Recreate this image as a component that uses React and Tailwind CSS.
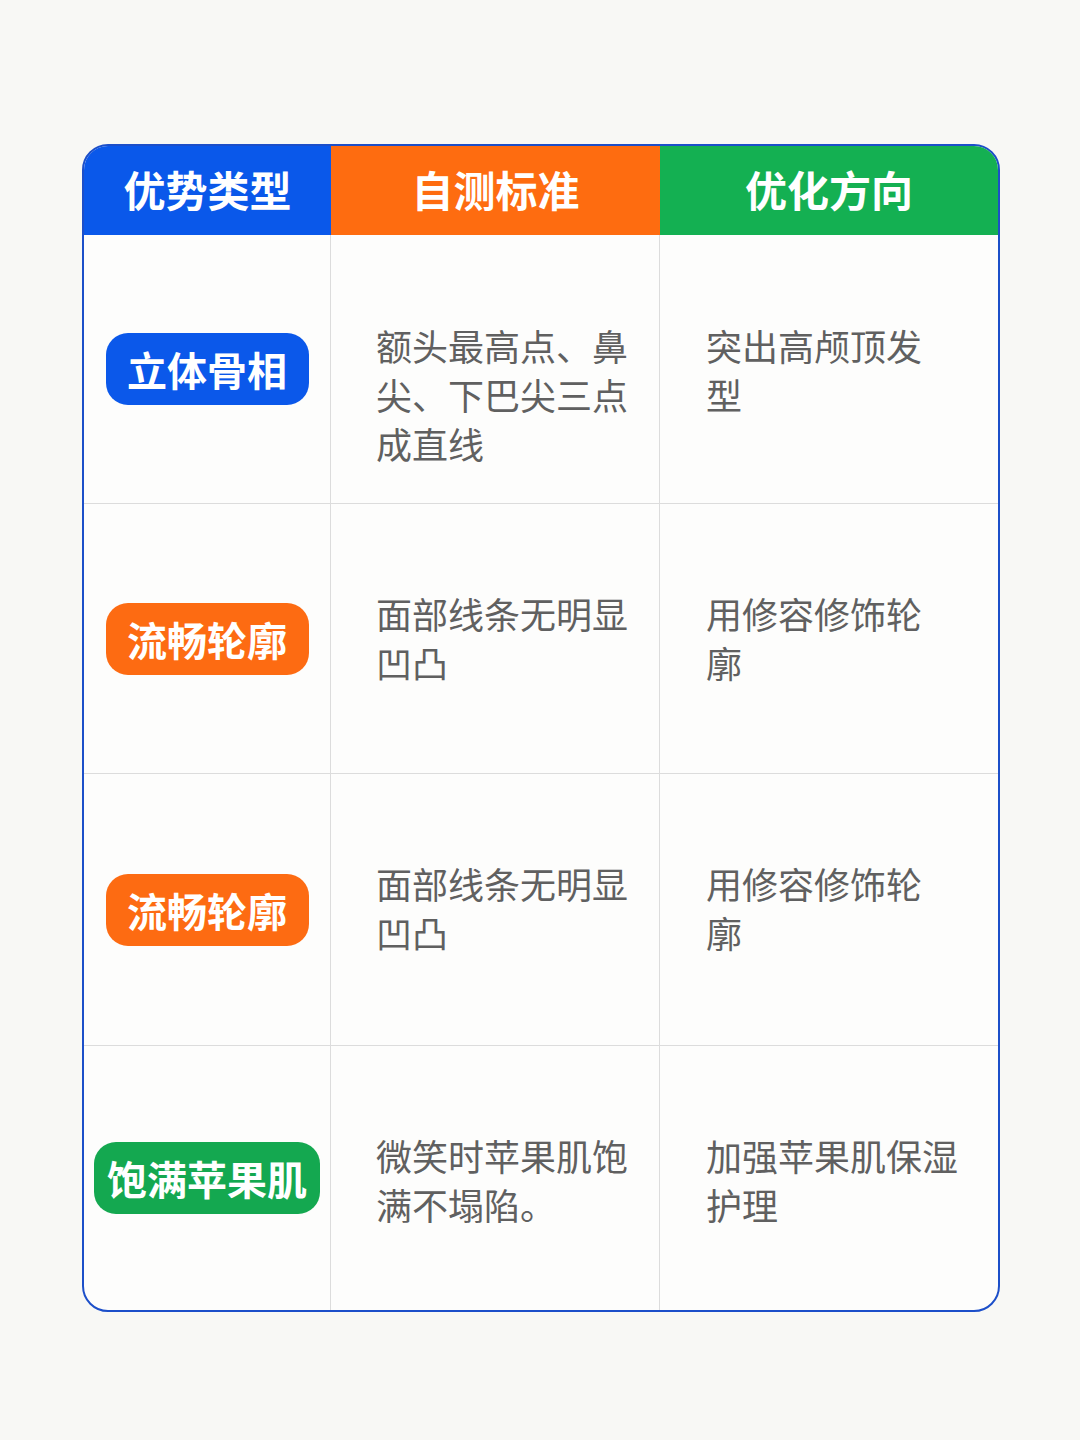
export default function App() {
  const rows = [
    { h: "h-[268px]", tag: "立体骨相", color: "bg-[#0b58ea]", px: "w-[203px]", c2: ["额头最高点、鼻", "尖、下巴尖三点", "成直线"], c3: ["突出高颅顶发", "型"] },
    { h: "h-[270px]", tag: "流畅轮廓", color: "bg-[#fd6b12]", px: "w-[203px]", c2: ["面部线条无明显", "凹凸"], c3: ["用修容修饰轮", "廓"] },
    { h: "h-[272px]", tag: "流畅轮廓", color: "bg-[#fd6b12]", px: "w-[203px]", c2: ["面部线条无明显", "凹凸"], c3: ["用修容修饰轮", "廓"] },
    { h: "h-[265px]", tag: "饱满苹果肌", color: "bg-[#14a850]", px: "w-[226px]", c2: ["微笑时苹果肌饱", "满不塌陷。"], c3: ["加强苹果肌保湿", "护理"] },
  ];
  const font = { fontFamily: '"Noto Sans CJK SC", "Noto Sans", sans-serif' };
  return (
    <div className="w-[1080px] h-[1440px] bg-[#f8f8f5] pt-[144px] pl-[82px]" style={font}>
      <div className="w-[918px] rounded-[26px] border-2 border-[#1c4fc9] overflow-hidden bg-[#fdfdfc]">
        <div className="grid grid-cols-[247px_329px_338px] h-[89px] text-white font-bold text-[42px]">
          <div className="bg-[#0a58ea] flex items-center justify-center pb-[5px]">优势类型</div>
          <div className="bg-[#fe6c10] flex items-center justify-center pb-[5px]">自测标准</div>
          <div className="bg-[#14b052] flex items-center justify-center pb-[5px]">优化方向</div>
        </div>
        {rows.map((r, i) => (
          <div
            key={i}
            className={`grid grid-cols-[247px_329px_338px] ${r.h} ${i > 0 ? "border-t border-[#dcdcdc]" : ""}`}
          >
            <div className="flex items-center justify-center border-r border-[#dcdcdc]">
              <div className={`${r.color} ${r.px} h-[72px] rounded-[22px] flex items-center justify-center text-white font-bold text-[40px]`}>
                {r.tag}
              </div>
            </div>
            <div className={`border-r border-[#dcdcdc] pl-[45px] ${i > 0 ? "pt-[85px]" : "pt-[86px]"} text-[36px] leading-[49px] text-[#606060]`}>
              {r.c2.map((l, j) => (
                <div key={j} className="whitespace-nowrap">{l}</div>
              ))}
            </div>
            <div className={`pl-[46px] ${i > 0 ? "pt-[85px]" : "pt-[86px]"} text-[36px] leading-[49px] text-[#606060]`}>
              {r.c3.map((l, j) => (
                <div key={j} className="whitespace-nowrap">{l}</div>
              ))}
            </div>
          </div>
        ))}
      </div>
    </div>
  );
}
